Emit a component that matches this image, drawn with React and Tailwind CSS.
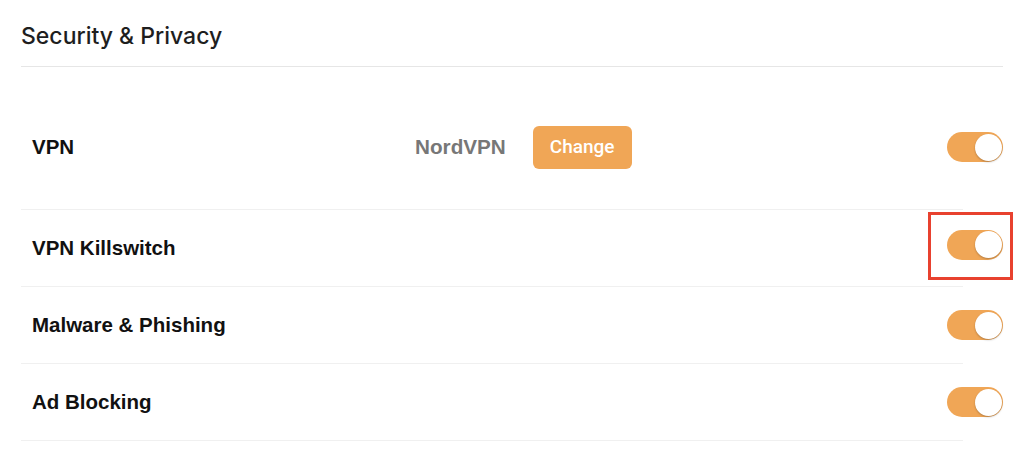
import React, { useState } from "react";

const Toggle = ({ on, onChange }) => (
  <button
    type="button"
    onClick={() => onChange(!on)}
    className={`relative w-[56px] h-[30px] rounded-full shrink-0 ${on ? "bg-[#f0a656]" : "bg-[#d9d9d9]"}`}
  >
    <span
      className={`absolute top-[1.5px] w-[27px] h-[27px] rounded-full bg-white shadow-[0_1px_2px_rgba(0,0,0,0.25)] ${on ? "right-[1.5px]" : "left-[1.5px]"}`}
    />
  </button>
);

const Divider = () => <div className="h-px bg-[#f0f0f0] mr-[40px]" />;

const App = () => {
  const [settings, setSettings] = useState({
    vpn: true,
    killswitch: true,
    malware: true,
    ads: true,
  });
  const set = (key) => (v) => setSettings((s) => ({ ...s, [key]: v }));

  const rows = [
    { key: "killswitch", label: "VPN Killswitch", highlight: true },
    { key: "malware", label: "Malware & Phishing" },
    { key: "ads", label: "Ad Blocking" },
  ];

  return (
    <main className="min-h-screen bg-white pl-[21px] pr-[21px] font-['Liberation_Sans',Arial,sans-serif]">
      <div className="h-[67px] flex items-center border-b border-[#e6e6e6]">
        <h2 className="text-[23px] leading-none font-medium text-[#1e1e1e] font-['Inter',sans-serif] pt-[7px]">
          Security &amp; Privacy
        </h2>
      </div>

      <div className="pt-[16px]">
        <div className="h-[126px] flex items-center pl-[11px] pt-[2px]">
          <span className="w-[383px] text-[20.5px] font-bold text-[#111]">VPN</span>
          <span className="text-[20.7px] font-bold text-[#777]">NordVPN</span>
          <button
            type="button"
            className="ml-[27px] h-[43px] px-[17px] rounded-[6px] bg-[#f0a656] text-white text-[19px] font-medium font-['Roboto',sans-serif]"
          >
            Change
          </button>
          <div className="flex-1" />
          <Toggle on={settings.vpn} onChange={set("vpn")} />
        </div>
        <Divider />

        {rows.map((r) => (
          <div key={r.key}>
            <div className="h-[76px] flex items-center pl-[11px]">
              <span className="flex-1 text-[20.5px] font-bold text-[#111]">{r.label}</span>
              {r.highlight ? (
                <div className="relative">
                  <div className="absolute -left-[19px] -top-[18px] w-[85px] h-[68px] border-[3px] border-[#e8412f] pointer-events-none" />
                  <Toggle on={settings[r.key]} onChange={set(r.key)} />
                </div>
              ) : (
                <Toggle on={settings[r.key]} onChange={set(r.key)} />
              )}
            </div>
            <Divider />
          </div>
        ))}
      </div>
    </main>
  );
};

export default App;
